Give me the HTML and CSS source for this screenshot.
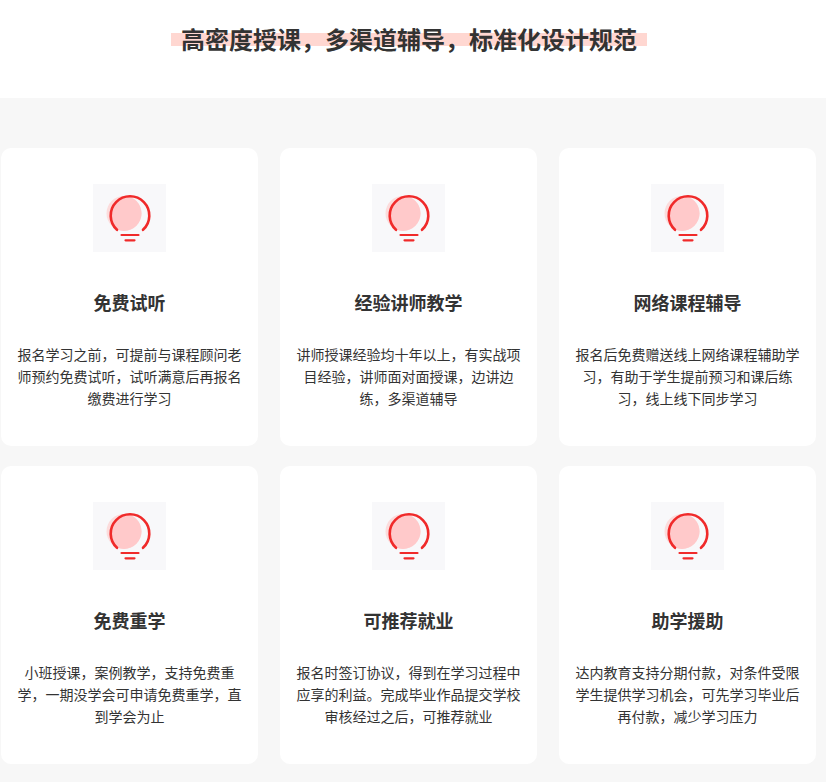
FILE: index.html
```html
<!DOCTYPE html>
<html lang="zh-CN">
<head>
<meta charset="utf-8">
<title>高密度授课</title>
<link rel="stylesheet" href="styles.css">
</head>
<body>
<header class="head">
  <h1 class="head-title"><span class="head-text">高密度授课，多渠道辅导，标准化设计规范</span></h1>
</header>
<main class="band">
  <section class="grid">
    <article class="card">
      <div class="icon"><svg viewBox="0 0 73 68" width="73" height="68"><use href="#bulb"/></svg></div>
      <h2 class="card-title">免费试听</h2>
      <p class="card-text">报名学习之前，可提前与课程顾问老师预约免费试听，试听满意后再报名缴费进行学习</p>
    </article>
    <article class="card">
      <div class="icon"><svg viewBox="0 0 73 68" width="73" height="68"><use href="#bulb"/></svg></div>
      <h2 class="card-title">经验讲师教学</h2>
      <p class="card-text">讲师授课经验均十年以上，有实战项目经验，讲师面对面授课，边讲边练，多渠道辅导</p>
    </article>
    <article class="card">
      <div class="icon"><svg viewBox="0 0 73 68" width="73" height="68"><use href="#bulb"/></svg></div>
      <h2 class="card-title">网络课程辅导</h2>
      <p class="card-text">报名后免费赠送线上网络课程辅助学习，有助于学生提前预习和课后练习，线上线下同步学习</p>
    </article>
    <article class="card">
      <div class="icon"><svg viewBox="0 0 73 68" width="73" height="68"><use href="#bulb"/></svg></div>
      <h2 class="card-title">免费重学</h2>
      <p class="card-text">小班授课，案例教学，支持免费重学，一期没学会可申请免费重学，直到学会为止</p>
    </article>
    <article class="card">
      <div class="icon"><svg viewBox="0 0 73 68" width="73" height="68"><use href="#bulb"/></svg></div>
      <h2 class="card-title">可推荐就业</h2>
      <p class="card-text">报名时签订协议，得到在学习过程中应享的利益。完成毕业作品提交学校审核经过之后，可推荐就业</p>
    </article>
    <article class="card">
      <div class="icon"><svg viewBox="0 0 73 68" width="73" height="68"><use href="#bulb"/></svg></div>
      <h2 class="card-title">助学援助</h2>
      <p class="card-text">达内教育支持分期付款，对条件受限学生提供学习机会，可先学习毕业后再付款，减少学习压力</p>
    </article>
  </section>
</main>
<svg class="defs" width="0" height="0" aria-hidden="true">
  <defs>
    <clipPath id="bulb-inner">
      <circle cx="37" cy="31" r="19.5"/>
    </clipPath>
    <g id="bulb">
      <rect width="73" height="68" fill="#f8f8fa"/>
      <circle cx="31" cy="29.4" r="17.5" fill="#fcdcdc"/>
      <circle cx="31" cy="29.4" r="17.5" fill="#ffc9ca" clip-path="url(#bulb-inner)"/>
      <path d="M24 45.8 A19.3 19.3 0 1 1 50 45.8" fill="none" stroke="#f02a2a" stroke-width="2.6" stroke-linecap="round"/>
      <path d="M28.5 51 H45.5" stroke="#f02a2a" stroke-width="2.2" stroke-linecap="round"/>
      <path d="M32.5 56.3 H41.5" stroke="#f02a2a" stroke-width="2.2" stroke-linecap="round"/>
    </g>
  </defs>
</svg>
</body>
</html>
```
FILE: styles.css
```css
* { box-sizing: border-box; }
html, body { margin: 0; padding: 0; }
body {
  background: #fff;
  color: #333;
  font-family: "Microsoft YaHei", "Noto Sans CJK SC", "Noto Sans", sans-serif;
}
.head {
  height: 98px;
  display: flex;
  justify-content: center;
  align-items: flex-start;
  padding: 23px 8px 0 0;
}
.head-title {
  margin: 0;
  font-size: 24px;
  line-height: 32px;
  font-weight: 700;
  color: #333;
}
.head-text {
  position: relative;
  display: inline-block;
  padding: 0 10px;
  z-index: 0;
}
.head-text::before {
  content: "";
  position: absolute;
  z-index: -1;
  left: 0;
  right: 0;
  top: 10px;
  height: 13px;
  background: #ffd7d1;
}
.band {
  background: #f7f7f7;
  height: 684px;
  padding: 50px 0 0 1px;
}
.grid {
  display: grid;
  grid-template-columns: repeat(3, 257px);
  column-gap: 22px;
  row-gap: 20px;
}
.card {
  height: 298px;
  background: #fff;
  border-radius: 10px;
  padding: 36px 16px 0;
  text-align: center;
}
.icon {
  width: 73px;
  height: 68px;
  margin: 0 auto;
}
.icon svg { display: block; }
.card-title {
  margin: 37px 0 0;
  font-size: 18px;
  line-height: 26px;
  font-weight: 700;
  color: #333;
}
.card-text {
  margin: 28px 0 0;
  font-size: 14px;
  line-height: 22px;
  color: #333;
}
.defs { position: absolute; }
```
